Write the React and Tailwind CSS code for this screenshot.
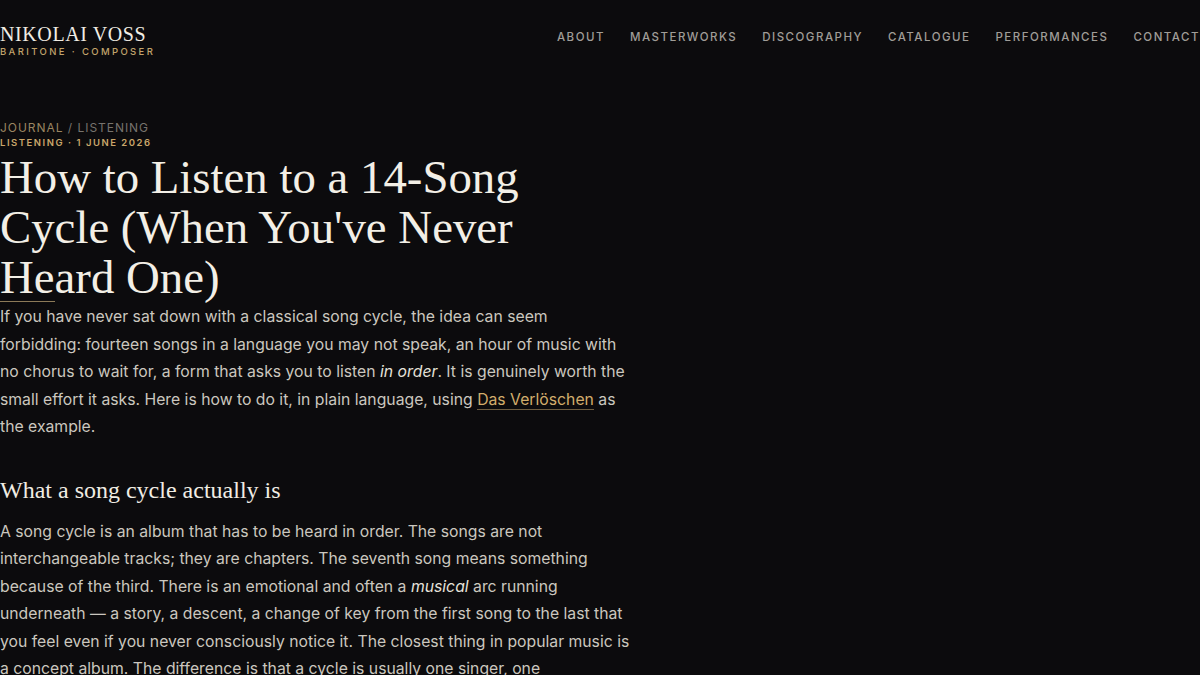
const nav = ["About", "Masterworks", "Discography", "Catalogue", "Performances", "Contact"];

const serif = { fontFamily: '"Liberation Serif", "DejaVu Serif", serif' };

export default function App() {
  return (
    <div
      className="min-h-screen w-full overflow-hidden bg-[#0c0b0d] text-[#e9e4da]"
      style={{ fontFamily: 'Inter, "Noto Sans", sans-serif' }}
    >
      <header className="flex items-start justify-between pt-[23px]">
        <div>
          <div className="text-[20px] leading-[22px] tracking-[0.03em] text-[#f1ede4]" style={serif}>
            NIKOLAI VOSS
          </div>
          <div className="mt-[1px] text-[9.5px] font-medium uppercase leading-[12px] tracking-[0.25em] text-[#c2a46c]">
            Baritone · Composer
          </div>
        </div>
        <nav className="mt-[6px] flex gap-[25px] text-[11.5px] font-medium uppercase tracking-[0.13em] text-[#a09d98]">
          {nav.map((n) => (
            <a key={n} className="whitespace-nowrap">
              {n}
            </a>
          ))}
        </nav>
      </header>

      <main className="mt-[62px] max-w-[630px]">
        <div className="text-[12px] uppercase leading-[16px] tracking-[0.08em]">
          <span className="text-[#9a8561]">Journal</span>
          <span className="text-[#77736d]"> / Listening</span>
        </div>
        <div className="text-[9.5px] font-semibold uppercase leading-[14px] tracking-[0.16em] text-[#c9a66a]">
          Listening · 1 June 2026
        </div>

        <h1
          className="mt-[2px] max-w-[560px] text-[46.8px] leading-[50px] text-[#f3efe6]"
          style={serif}
        >
          How to Listen to a 14-Song Cycle (When You've Never Heard One)
        </h1>
        <div className="mt-[-1px] h-px w-[55px] bg-[#8c7a58]" />

        <p className="mt-[1px] text-[15.75px] leading-[27.5px] text-[#cbc7bf]">
          If you have never sat down with a classical song cycle, the idea can seem forbidding: fourteen songs in a
          language you may not speak, an hour of music with no chorus to wait for, a form that asks you to listen{" "}
          <em className="text-[#e6e2da]">in order</em>. It is genuinely worth the small effort it asks. Here is how to do
          it, in plain language, using{" "}
          <a className="border-b border-[#6e5d40] text-[#d2ad6c]">Das Verlöschen</a> as the example.
        </p>

        <h2 className="mt-[34px] text-[24px] leading-[30px] text-[#f1ede4]" style={serif}>
          What a song cycle actually is
        </h2>

        <p className="mt-[13px] text-[15.75px] leading-[27.5px] text-[#cbc7bf]">
          A song cycle is an album that has to be heard in order. The songs are not interchangeable tracks; they are
          chapters. The seventh song means something because of the third. There is an emotional and often a{" "}
          <em className="text-[#e6e2da]">musical</em> arc running underneath — a story, a descent, a change of key from
          the first song to the last that you feel even if you never consciously notice it. The closest thing in popular
          music is a concept album. The difference is that a cycle is usually one singer, one accompanist, and one poet.
        </p>
      </main>
    </div>
  );
}
